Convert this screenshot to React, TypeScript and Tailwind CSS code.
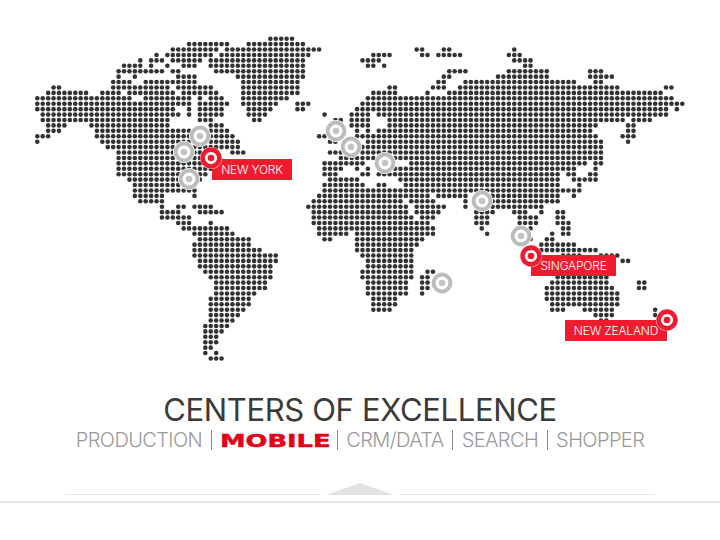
const ROWS = [
  "43-47",
  "28-35 39-49",
  "25-33 35-52 70-71 75-76 88",
  "22 24-32 34-50 62-65 71-72 74-78 87-89",
  "19 21-23 25-30 32-49 60-63 88-91",
  "16-19 21 24 27-29 32-49 61-62 64 90-91",
  "15-23 25-26 33-49 76-79 87-94 102-104",
  "15 18 26-29 37-49 75-76 85-94 102-106",
  "14-17 20-29 38-48 74-75 79-99 103-104",
  "3-4 14-24 26-32 38-48 65-66 73-75 78-107 116-117",
  "2-9 12-15 17-25 27-33 38-48 62-66 72 76-115",
  "0-17 20-28 30 32-34 38-46 61-117",
  "0-28 30-35 38-44 48-50 60-119",
  "0-25 28 30-34 39-43 48-49 59-116 118",
  "1-26 28 30-34 39-42 53 58-61 63-116",
  "1-24 30-32 40-41 55-56 58-61 65-108 110-113",
  "2-5 10-24 32-34 58-61 65-103 109-110",
  "2-4 11-35 59 61 63-102 109-110",
  "0-2 11-36 52-53 59-103 108-110",
  "0 12-37 54-55 61-104 109",
  "13-37 60-104",
  "15-30 36-38 54-56 60-104",
  "15-31 56-62 66-104",
  "15-31 53-60 69-101 103-104",
  "15-32 53-56 59 61 66-99 103",
  "15-31 53-55 60-61 63-96 98-99 102-103",
  "17-30 54-59 67-96 99-103",
  "18-27 53-60 63-64 68-96 100",
  "18-29 53-100",
  "18-23 29 52-72 74-79 84-96 99",
  "19-23 51-67 69-73 79 84-96",
  "23 26-27 29-32 50-68 70-75 79 84-93",
  "23-26 30-34 51-68 70-74 81-84 88-90 93 96-97",
  "23-28 51-69 71-73 81-83 89-92 96-97",
  "26-28 32 51-72 81-83 89-92 96-98",
  "27-35 52-73 82 91 97-98",
  "29-36 52-57 59-73 83 95 97-98",
  "30-39 53-54 59-71 91 94-95",
  "29-39 59-70 93-99",
  "29-41 59-69 93-103",
  "29-44 60-69 97-100 104-107",
  "30-44 61-69 108-109",
  "30-43 61-69",
  "31-43 60-69 72-73",
  "32-43 60-69 71-72 96-105",
  "33-42 61-68 71-72 95-105 111-112",
  "33-42 61-68 71-72 94-106 111-112",
  "33-40 61-68 71 94-107",
  "32-39 62-66 94-107",
  "32-39 62-66 95-107",
  "32-38 62-65 95-97 101-106 114",
  "32-37 103-106 114-115",
  "32-36 104-105",
  "31-35",
  "31-34",
  "31-33",
  "31-33",
  "31-32",
  "31 33",
  "32-34",
];

const PITCH = 5.42;

function WorldDots() {
  const dots: { x: number; y: number }[] = [];
  ROWS.forEach((row, r) => {
    row.split(" ").forEach((run) => {
      const [a, b] = run.split("-").map(Number);
      for (let c = a; c <= (b ?? a); c++) {
        dots.push({ x: 37.3 + c * PITCH, y: 38.7 + r * PITCH });
      }
    });
  });
  return (
    <svg width="720" height="385" viewBox="0 0 720 385" className="block">
      {dots.map((d) => (
        <circle key={`${d.x}-${d.y}`} cx={d.x} cy={d.y} r="2.3" fill="#333333" />
      ))}
    </svg>
  );
}

function Pin({ x, y, red }: { x: number; y: number; red?: boolean }) {
  return (
    <svg width="24" height="24" viewBox="0 0 24 24" className="absolute" style={{ left: x - 12, top: y - 12 }}>
      <circle cx="12" cy="12" r="11" fill="#ffffff" />
      <circle cx="12" cy="12" r="8.4" fill="#ffffff" stroke={red ? "#ed1c2e" : "#bcbcbc"} strokeWidth={red ? 4.6 : 4} />
      <circle cx="12" cy="12" r="3.3" fill={red ? "#ed1c2e" : "#c4c4c4"} />
    </svg>
  );
}

function Flag({ x, y, w, text }: { x: number; y: number; w: number; text: string }) {
  return (
    <div
      className="absolute h-[21px] bg-[#ed1c2e] flex items-center justify-center text-white text-[12px] font-light tracking-[-0.2px]"
      style={{ left: x, top: y, width: w }}
    >
      {text}
    </div>
  );
}

function Sep() {
  return <div className="w-px h-[20px] bg-[#8a8a8a]" />;
}

export default function App() {
  return (
    <div className="relative w-[720px] h-[540px] bg-white overflow-hidden font-['Inter','Liberation_Sans',sans-serif]">
      <WorldDots />

      <Flag x={212} y={159} w={80} text="NEW YORK" />
      <Flag x={531} y={255} w={85} text="SINGAPORE" />
      <Flag x={565} y={320} w={102} text="NEW ZEALAND" />

      <Pin x={200} y={135.5} />
      <Pin x={183.5} y={151.5} />
      <Pin x={189} y={179} />
      <Pin x={211} y={158} red />
      <Pin x={336} y={131} />
      <Pin x={351} y={147} />
      <Pin x={384.5} y={163} />
      <Pin x={481.5} y={201} />
      <Pin x={520.5} y={235.5} />
      <Pin x={531} y={255.5} red />
      <Pin x={441.5} y={283} />
      <Pin x={666.5} y={320} red />

      <div className="flex flex-col items-center">
        <h1 className="text-[31px] leading-[36px] mt-[7px] font-normal tracking-[-0.35px] text-[#3a3a3a]">CENTERS OF EXCELLENCE</h1>
        <div className="flex items-center h-[24px] text-[20px] font-light tracking-[-0.6px] text-[#999999] gap-[8.5px]">
          <span>PRODUCTION</span>
          <Sep />
          <span className="inline-block w-[108px] h-[24px] leading-[24px]">
            <span className="inline-block origin-left scale-x-[1.39] font-['DejaVu_Sans',sans-serif] font-bold text-[18.5px] tracking-normal text-[#e2001a] [-webkit-text-stroke:0.5px_#e2001a]">MOBILE</span>
          </span>
          <Sep />
          <span>CRM/DATA</span>
          <Sep />
          <span>SEARCH</span>
          <Sep />
          <span>SHOPPER</span>
        </div>
      </div>

      <div className="flex items-end justify-between w-[590px] mx-auto mt-[31px] h-[12px]">
        <div className="w-[255px] h-px bg-[#e9e9e9]" />
        <div className="w-[68px] h-[12px] bg-[#e3e3e3] [clip-path:polygon(0_100%,50%_0,100%_100%)]" />
        <div className="w-[255px] h-px bg-[#e9e9e9]" />
      </div>
      <div className="mt-[6px] h-[2px] bg-[#e6e6e6]" />
    </div>
  );
}
